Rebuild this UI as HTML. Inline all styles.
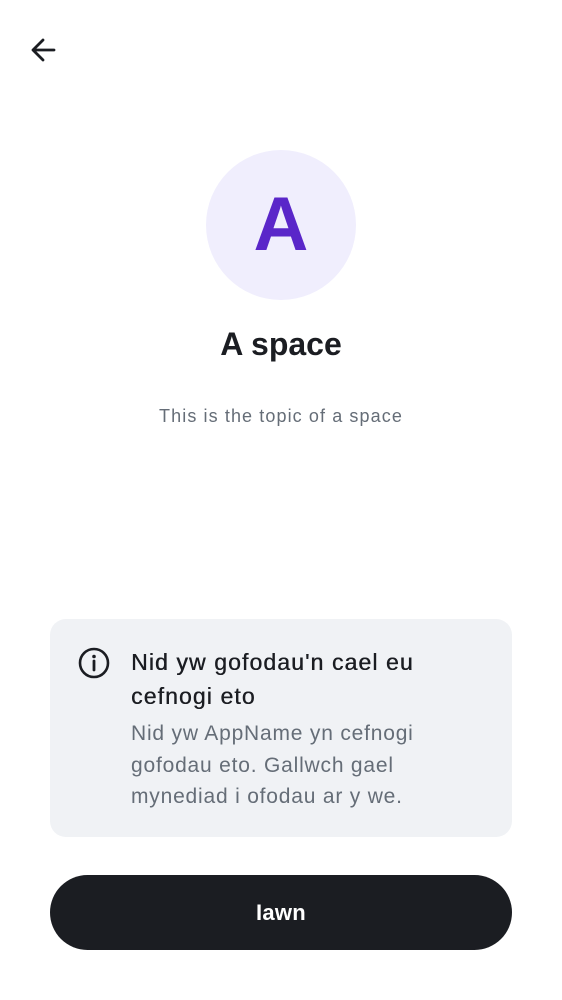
<!DOCTYPE html>
<html><head><style>
body{margin:0;width:562px;height:1000px;background:#fff;font-family:"Liberation Sans",sans-serif;position:relative;overflow:hidden}
.abs{position:absolute}
</style></head><body>
<svg class="abs" style="left:30px;top:37px" width="26" height="26" viewBox="0 0 26 26"><path d="M24 13H4M13 3L3 13l10 10" fill="none" stroke="#1b1d22" stroke-width="2.8" stroke-linecap="round" stroke-linejoin="round"/></svg>
<div class="abs" style="left:206px;top:150px;width:150px;height:150px;border-radius:50%;background:#f0eefd;color:#5a26c9;font-size:76px;font-weight:bold;text-align:center;line-height:150px">A</div>
<div class="abs" style="left:0;top:326px;width:562px;text-align:center;font-size:32px;font-weight:bold;color:#1b1d22">A space</div>
<div class="abs" style="left:0;top:406px;width:562px;text-align:center;font-size:18px;color:#656d77;letter-spacing:1.1px">This is the topic of a space</div>
<div class="abs" style="left:50px;top:619px;width:462px;height:218px;border-radius:16px;background:#f0f2f5"></div>
<svg class="abs" style="left:77px;top:646px" width="34" height="34" viewBox="0 0 34 34"><circle cx="17" cy="17" r="14" fill="none" stroke="#1b1d22" stroke-width="2.6"/><circle cx="17" cy="10.5" r="1.8" fill="#1b1d22"/><path d="M17 15v9" stroke="#1b1d22" stroke-width="2.8" stroke-linecap="round"/></svg>
<div class="abs" style="left:131px;top:645px;width:310px;font-size:23px;line-height:34px;color:#1b1d22;letter-spacing:1.1px;text-shadow:0.4px 0 0 #1b1d22">Nid yw gofodau'n cael eu cefnogi eto</div>
<div class="abs" style="left:131px;top:718px;width:310px;font-size:21px;line-height:31.5px;color:#656d77;letter-spacing:0.8px">Nid yw AppName yn cefnogi gofodau eto. Gallwch gael mynediad i ofodau ar y we.</div>
<div class="abs" style="left:50px;top:875px;width:462px;height:75px;border-radius:38px;background:#1b1d22;color:#fff;font-size:22px;font-weight:bold;text-align:center;line-height:75px;letter-spacing:0.3px">Iawn</div>
</body></html>
